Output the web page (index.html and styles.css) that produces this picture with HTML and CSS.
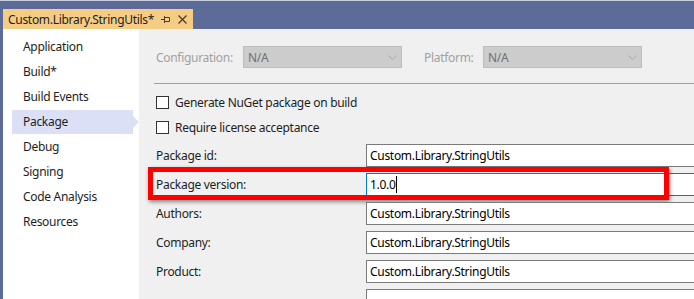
FILE: index.html
```html
<!DOCTYPE html>
<html>
<head>
<meta charset="utf-8">
<link rel="stylesheet" href="styles.css">
</head>
<body>
<div class="window">
  <div class="titlebar">
    <div class="tab">
      <span class="tab-title">Custom.Library.StringUtils*</span>
      <svg class="pin" width="9" height="9" viewBox="0 0 9 9"><path d="M0 4.5H3M3.5 1V8M3.5 2.5H8.5V6.5H3.5" fill="none" stroke="#4a3d22" stroke-width="1"/></svg>
      <svg class="close" width="9" height="9" viewBox="0 0 9 9"><path d="M0.5 0.5L8.5 8.5M8.5 0.5L0.5 8.5" fill="none" stroke="#4a3d22" stroke-width="1.3"/></svg>
    </div>
  </div>
  <div class="main">
    <nav class="sidebar">
      <div class="nav-item">Application</div>
      <div class="nav-item">Build*</div>
      <div class="nav-item">Build Events</div>
      <div class="nav-item selected">Package</div>
      <div class="nav-item">Debug</div>
      <div class="nav-item">Signing</div>
      <div class="nav-item">Code Analysis</div>
      <div class="nav-item">Resources</div>
    </nav>
    <section class="content">
      <div class="config-row">
        <span class="dis-label config-label">Configuration:</span>
        <div class="select"><span>N/A</span><svg class="chev" width="9" height="5" viewBox="0 0 9 5"><path d="M0.5 0.5L4.5 4.5L8.5 0.5" fill="none" stroke="#a8a8a8" stroke-width="1"/></svg></div>
        <span class="dis-label platform-label">Platform:</span>
        <div class="select"><span>N/A</span><svg class="chev" width="9" height="5" viewBox="0 0 9 5"><path d="M0.5 0.5L4.5 4.5L8.5 0.5" fill="none" stroke="#a8a8a8" stroke-width="1"/></svg></div>
      </div>
      <div class="separator"></div>
      <div class="check-row"><span class="checkbox"></span><span>Generate NuGet package on build</span></div>
      <div class="check-row"><span class="checkbox"></span><span>Require license acceptance</span></div>
      <div class="form">
        <div class="form-row"><span class="label">Package id:</span><div class="input">Custom.Library.StringUtils</div></div>
        <div class="form-row highlighted"><span class="label">Package version:</span><div class="input focused"><span class="caret">1.0.0</span></div><div class="callout"></div></div>
        <div class="form-row"><span class="label">Authors:</span><div class="input">Custom.Library.StringUtils</div></div>
        <div class="form-row"><span class="label">Company:</span><div class="input">Custom.Library.StringUtils</div></div>
        <div class="form-row"><span class="label">Product:</span><div class="input">Custom.Library.StringUtils</div></div>
        <div class="form-row"><span class="label"></span><div class="input"></div></div>
      </div>
    </section>
  </div>
</div>
</body>
</html>
```
FILE: styles.css
```css
* { box-sizing: border-box; }
html, body { margin: 0; padding: 0; }
body {
  width: 694px;
  height: 299px;
  overflow: hidden;
  font-family: "Noto Sans", "Open Sans", sans-serif;
  font-size: 12px;
  letter-spacing: -0.3px;
  color: #1e1e1e;
  background: #5d6b99;
}
.window { width: 694px; height: 299px; display: flex; flex-direction: column; }
.titlebar {
  height: 29px;
  border-top: 1px solid #c9cfe0;
  background: #5d6b99;
  padding-left: 3px;
  display: flex;
  align-items: flex-end;
}
.tab {
  width: 190px;
  height: 20px;
  background: #f5cc84;
  display: flex;
  align-items: center;
  padding-left: 5px;
}
.tab-title { white-space: nowrap; width: 153px; flex: none; overflow: hidden; }
.pin { flex: none; margin-top: 1px; }
.close { flex: none; margin-left: 8px; }
.main {
  flex: 1;
  display: flex;
  border-left: 3px solid #5d6b99;
  min-height: 0;
}
.sidebar {
  width: 136px;
  background: #ffffff;
  padding-top: 6px;
}
.nav-item {
  height: 25px;
  line-height: 24px;
  margin-left: 9px;
  padding-left: 11px;
  width: 121px;
  white-space: nowrap;
  position: relative;
}
.nav-item.selected { background: #dce0f6; height: 24px; margin-bottom: 1px; }
.nav-item.selected::after {
  content: "";
  position: absolute;
  right: -6px;
  top: 6px;
  border-left: 6px solid #dce0f6;
  border-top: 6px solid transparent;
  border-bottom: 6px solid transparent;
}
.content {
  flex: 1;
  background: #f0f0f0;
  padding-left: 15px;
  padding-top: 17px;
  overflow: hidden;
}
.config-row { display: flex; align-items: center; height: 22px; padding-left: 2px; }
.dis-label { color: #a0a0a0; white-space: nowrap; }
.config-label { width: 87px; }
.platform-label { width: 59px; margin-left: 22px; }
.select {
  width: 159px;
  height: 22px;
  background: #cccccc;
  border: 1px solid #bdbdbd;
  color: #707070;
  display: flex;
  align-items: center;
  padding-left: 4px;
}
.chev { margin-left: auto; margin-right: 4px; }
.separator { height: 1px; background: #a0a0a0; margin-top: 15px; margin-bottom: 6px; }
.check-row {
  height: 25px;
  display: flex;
  align-items: center;
  padding-left: 2px;
  gap: 6px;
}
.checkbox {
  width: 13px;
  height: 13px;
  background: #ffffff;
  border: 1px solid #333333;
}
.form { margin-top: 4px; display: flex; flex-direction: column; gap: 6px; }
.form-row {
  display: flex;
  align-items: center;
  height: 23px;
  padding-left: 2px;
  position: relative;
}
.label { width: 210px; flex: none; white-space: nowrap; }
.input {
  flex: none;
  width: 360px;
  height: 23px;
  background: #ffffff;
  border: 1px solid #7a7a7a;
  padding-left: 3px;
  line-height: 21px;
  white-space: nowrap;
  color: #000000;
}
.input.focused { border-color: #0078d7; }
.caret { border-right: 1px solid #000000; }
.callout {
  position: absolute;
  left: -6px;
  top: -6px;
  width: 521px;
  height: 33px;
  border: 5px solid #ff0000;
  box-shadow: 1px 2px 4px rgba(0, 0, 0, 0.45);
  pointer-events: none;
}
```
